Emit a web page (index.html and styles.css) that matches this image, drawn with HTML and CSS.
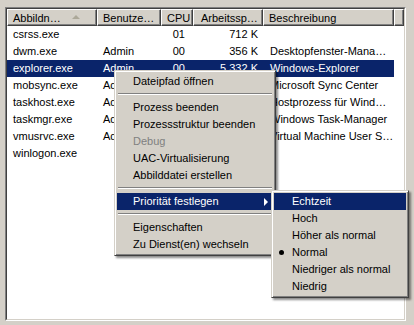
FILE: index.html
```html
<!DOCTYPE html>
<html>
<head>
<meta charset="utf-8">
<link rel="stylesheet" href="styles.css">
</head>
<body>
<div class="window">
  <div class="lv-outer">
    <div class="lv-inner">
      <div class="header">
        <div class="hcell c1"><span>Abbildn…</span><span class="sort"></span></div>
        <div class="hcell c2">Benutze…</div>
        <div class="hcell c3">CPU</div>
        <div class="hcell c4">Arbeitssp…</div>
        <div class="hcell c5">Beschreibung</div>
        <div class="hcell c6"></div>
      </div>
      <div class="rows">
        <div class="row"><span class="cell c1">csrss.exe</span><span class="cell c2"></span><span class="cell c3">01</span><span class="cell c4">712 K</span><span class="cell c5"></span></div>
        <div class="row"><span class="cell c1">dwm.exe</span><span class="cell c2">Admin</span><span class="cell c3">00</span><span class="cell c4">356 K</span><span class="cell c5">Desktopfenster-Mana…</span></div>
        <div class="row sel"><span class="cell c1">explorer.exe</span><span class="cell c2">Admin</span><span class="cell c3">00</span><span class="cell c4">5.332 K</span><span class="cell c5">Windows-Explorer</span></div>
        <div class="row"><span class="cell c1">mobsync.exe</span><span class="cell c2">Admin</span><span class="cell c3"></span><span class="cell c4"></span><span class="cell c5">Microsoft Sync Center</span></div>
        <div class="row"><span class="cell c1">taskhost.exe</span><span class="cell c2">Admin</span><span class="cell c3"></span><span class="cell c4"></span><span class="cell c5">Hostprozess für Wind…</span></div>
        <div class="row"><span class="cell c1">taskmgr.exe</span><span class="cell c2">Admin</span><span class="cell c3"></span><span class="cell c4"></span><span class="cell c5">Windows Task-Manager</span></div>
        <div class="row"><span class="cell c1">vmusrvc.exe</span><span class="cell c2">Admin</span><span class="cell c3"></span><span class="cell c4"></span><span class="cell c5">Virtual Machine User S…</span></div>
        <div class="row"><span class="cell c1">winlogon.exe</span><span class="cell c2"></span><span class="cell c3"></span><span class="cell c4"></span><span class="cell c5"></span></div>
      </div>
    </div>
  </div>

  <div class="menu main-menu">
    <div class="mi">Dateipfad öffnen</div>
    <div class="sep"></div>
    <div class="mi">Prozess beenden</div>
    <div class="mi">Prozessstruktur beenden</div>
    <div class="mi dis">Debug</div>
    <div class="mi">UAC-Virtualisierung</div>
    <div class="mi">Abbilddatei erstellen</div>
    <div class="sep"></div>
    <div class="mi hl has-sub"><span>Priorität festlegen</span><span class="arrow"></span></div>
    <div class="sep"></div>
    <div class="mi">Eigenschaften</div>
    <div class="mi">Zu Dienst(en) wechseln</div>
  </div>

  <div class="menu sub-menu">
    <div class="mi hl">Echtzeit</div>
    <div class="mi">Hoch</div>
    <div class="mi">Höher als normal</div>
    <div class="mi checked"><span class="bullet"></span><span>Normal</span></div>
    <div class="mi">Niedriger als normal</div>
    <div class="mi">Niedrig</div>
  </div>
</div>
</body>
</html>
```

FILE: styles.css
```css
html, body {
  margin: 0;
  padding: 0;
}

body {
  background: #d4d0c8;
  font-family: "Liberation Sans", Arial, sans-serif;
  font-size: 11px;
  color: #000;
}

.window {
  position: relative;
  width: 414px;
  height: 325px;
  padding: 7px 0 0 5px;
  box-sizing: border-box;
}

.lv-outer {
  width: 401px;
  height: 314px;
  box-sizing: border-box;
  border: 1px solid;
  border-color: #808080 #ffffff #ffffff #808080;
}

.lv-inner {
  height: 100%;
  box-sizing: border-box;
  border: 1px solid;
  border-color: #404040 #d4d0c8 #d4d0c8 #404040;
  background: #fff;
}

.header {
  display: flex;
  height: 17px;
}

.hcell {
  box-sizing: border-box;
  height: 17px;
  background: #d4d0c8;
  border-top: 1px solid #fff;
  border-left: 1px solid #fff;
  border-right: 1px solid #404040;
  border-bottom: 1px solid #404040;
  box-shadow: inset -1px -1px #808080;
  padding-left: 5px;
  display: flex;
  align-items: center;
  white-space: nowrap;
  overflow: hidden;
  flex: none;
}

.hcell.c1 { width: 90px; justify-content: space-between; padding-right: 16px; }
.hcell.c2 { width: 64px; }
.hcell.c3 { width: 32px; }
.hcell.c4 { width: 70px; padding-left: 7px; }
.hcell.c5 { width: 131px; }
.hcell.c6 { width: 10px; }

.sort {
  width: 0;
  height: 0;
  border-left: 4px solid transparent;
  border-right: 4px solid transparent;
  border-bottom: 4px solid #aca899;
  margin-top: -1px;
}

.rows {
  display: flex;
  flex-direction: column;
}

.row {
  display: flex;
  width: 387px;
  height: 17px;
  line-height: 17px;
}

.row.sel {
  background: #0a246a;
  color: #fff;
}

.cell {
  box-sizing: border-box;
  white-space: nowrap;
  overflow: hidden;
  flex: none;
}

.cell.c1 { width: 90px; padding-left: 6px; }
.cell.c2 { width: 64px; padding-left: 6px; }
.cell.c3 { width: 32px; text-align: right; padding-right: 8px; }
.cell.c4 { width: 70px; text-align: right; padding-right: 5px; }
.cell.c5 { width: 131px; padding-left: 7px; }

.menu {
  position: absolute;
  box-sizing: border-box;
  background: #d4d0c8;
  border: 1px solid;
  border-color: #d4d0c8 #404040 #404040 #d4d0c8;
  box-shadow: inset 1px 1px #fff, inset -1px -1px #808080, 2px 2px 2px rgba(0, 0, 0, 0.45);
  padding: 2px;
  display: flex;
  flex-direction: column;
}

.main-menu {
  left: 114px;
  top: 70px;
  width: 162px;
}

.sub-menu {
  left: 271px;
  top: 190px;
  width: 138px;
}

.mi {
  height: 17px;
  line-height: 17px;
  padding-left: 16px;
  white-space: nowrap;
}

.sub-menu .mi {
  padding-left: 18px;
}

.mi.hl {
  background: #0a246a;
  color: #fff;
}

.mi.dis {
  color: #808080;
}

.mi.has-sub {
  display: flex;
  justify-content: space-between;
  align-items: center;
  padding-right: 5px;
}

.arrow {
  width: 0;
  height: 0;
  border-left: 4px solid #fff;
  border-top: 4px solid transparent;
  border-bottom: 4px solid transparent;
}

.sub-menu .mi.checked {
  display: flex;
  align-items: center;
  padding-left: 5px;
}

.bullet {
  width: 5px;
  height: 5px;
  border-radius: 50%;
  background: #000;
  margin-right: 8px;
}

.sep {
  height: 2px;
  box-sizing: border-box;
  margin: 3px 1px 4px;
  border-top: 1px solid #808080;
  border-bottom: 1px solid #fff;
}
```
